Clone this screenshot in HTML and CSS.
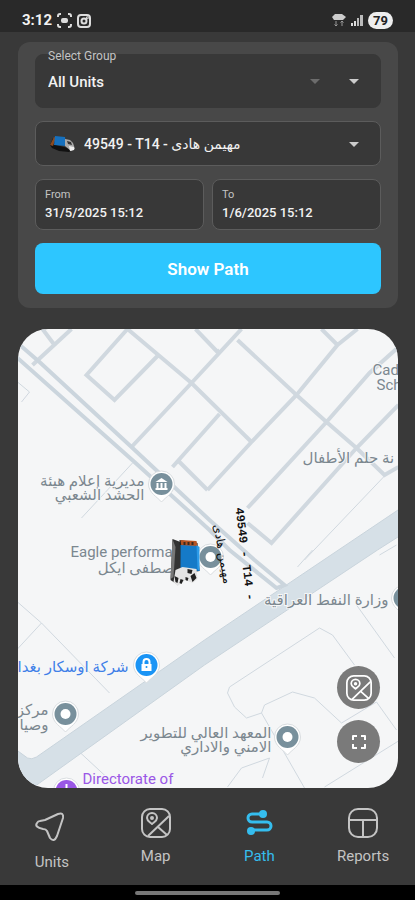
FILE: index.html
```html
<!DOCTYPE html>
<html lang="en">
<head>
    <meta charset="UTF-8" />
    <meta name="viewport" content="width=device-width, initial-scale=1.0" />
    <title>Path</title>
    <link rel="stylesheet" href="styles.css">
</head>
<body>
    <header class="status-bar">
        <span class="clock">3:12</span>
        <svg width="15" height="15" viewBox="0 0 15 15" fill="none" stroke="#ddd" stroke-width="2">
            <path d="M1 4V3a2 2 0 0 1 2-2h1M11 1h1a2 2 0 0 1 2 2v1M14 11v1a2 2 0 0 1-2 2h-1M4 14H3a2 2 0 0 1-2-2v-1" />
            <rect x="5" y="6" width="5" height="3" rx="1" fill="#ddd" />
        </svg>
        <svg width="14" height="15" viewBox="0 0 14 15" fill="none" stroke="#ddd" stroke-width="2">
            <rect x="1" y="2" width="12" height="12" rx="3" />
            <circle cx="7" cy="8" r="2.5" />
            <circle cx="10.300" cy="4.700" r="0.500" />
        </svg>
        <span class="spacer"></span>
        <svg width="14" height="15" viewBox="0 0 14 15" fill="#ccc">
            <path d="M0 4l3-3h7l4 3-3 3H2z" />
            <path d="M4 8v5M2.500 11.500L4 13l1.500-1.500M10 13V8M8.500 9.500L10 8l1.500 1.500" fill="none" stroke="#999" />
        </svg>
        <svg width="12" height="12" viewBox="0 0 12 12">
            <path d="M0 9h2v3H0zM3 7h2v5H3z" fill="#ddd" />
            <path d="M6 4h2v8H6zM9 1h3v11H9z" fill="#bbb" />
        </svg>
        <span class="battery">79</span>
    </header>

    <main>
        <form class="panel">
            <div class="field group-field">
                <label for="group">Select Group</label>
                <select id="group"><option>All Units</option></select>
                <svg class="arrow arrow-dim" width="10" height="5" viewBox="0 0 10 5"><path d="M0 0h10L5 5z" /></svg>
                <svg class="arrow" width="10" height="5" viewBox="0 0 10 5"><path d="M0 0h10L5 5z" /></svg>
            </div>
            <div class="field unit-field">
                <svg class="unit-icon" width="26" height="18" viewBox="0 0 26 18">
                    <path d="M0 10l3-7 3 7 12 3 6 1-5 3-10-1-7-3z" fill="#111" />
                    <path d="M0 10L4 2l2 1-3 8z" fill="#8a4a20" />
                    <path d="M5 1l10 1 1 9-12-1z" fill="#1670bd" />
                    <path d="M15 4l5 1 3 3 2 6-4 2-6-5z" fill="#aaa" />
                    <path d="M17 6l4 1 1 3-4-1z" fill="#333" />
                    <path d="M19 11l5 1v3l-4 1z" fill="#eee" />
                </svg>
                <select id="unit" aria-label="Unit"><option>49549 - T14 - مهيمن هادى</option></select>
                <svg class="arrow" width="10" height="5" viewBox="0 0 10 5"><path d="M0 0h10L5 5z" /></svg>
            </div>
            <div class="dates">
                <div class="field date-field">
                    <label for="from">From</label>
                    <input type="text" id="from" value="31/5/2025 15:12" />
                </div>
                <div class="field date-field">
                    <label for="to">To</label>
                    <input type="text" id="to" value="1/6/2025 15:12" />
                </div>
            </div>
            <button type="button" class="show-path">Show Path</button>
        </form>

        <section class="map">
            <svg class="map-canvas" viewBox="0 0 381 459" preserveAspectRatio="xMidYMid slice">
                <defs>
                    <g id="pin">
                        <path d="M0 18C-4 13-13 9-13 0a13 13 0 0 1 26 0C13 9 4 13 0 18z" fill="#fff" stroke="#d9dde0" />
                        <circle r="11" />
                    </g>
                </defs>

                <g class="lanes">
                    <path d="M339 276l38 53M212 358l90-59 13 7 22 30M212 358l-2 6 7 14 12 11 15-5 3-8 28-13 22 6 27 25 35-21 20 28M244 384l43 75M210 458l14-19 28-10-7 20M307 458l74-46M362 226l17-10M280 238l15-17" />
                    <path d="M0 273l24 21 68 70M24 294L-1 321M62 423l27 25M0 53l12 10-8 10M115 134l-51 55M287 231l80-84" />
                </g>

                <path class="highway" d="M382 180L187 311 19 428q-5 3-9 1l-11-8v39h15l8-6 165-118L360 221l22-14z" />

                <g class="streets">
                    <path d="M25 0l12 16M54 0L15 36M110 0L69 46l28 25 43-44M110 0l64 54 60 59M114 118l60-64L224 0M178 0l22 23" />
                    <path d="M155 138l47-53M160 131l30 30M190 161l44-48 45-47 41-50L340 0M304 0l16 16" />
                    <path d="M200 23l2-2M220 11l59 55 30 27 30 26 28 27 14-8M230 179l79-86 43-49 29-26M230 194l24 20 85-95 42-43" />
                </g>
                <path class="avenue" d="M0 14l22 19 92 85 78 73 45 40 30 25-8 3-47-38-20-20-75-68L-1 28" />

                <g class="pins">
                    <use href="#pin" x="144" y="155" />
                    <path d="M138 153l6-4 6 4zM139 154h2v5h-2zM143 154h2v5h-2zM147 154h2v5h-2zM138 159h12v2h-12z" fill="#fff" />
                    <use href="#pin" x="193" y="228" />
                    <circle cx="193" cy="228" r="5" fill="#fff" />
                    <use href="#pin" x="129" y="336" fill="#1a94f5" />
                    <path d="M124 335h10v7h-10z" fill="#fff" />
                    <path d="M126 335v-2a3 3 0 0 1 6 0v2" fill="none" stroke="#fff" stroke-width="2" />
                    <circle cx="129" cy="338" r="1" fill="#1a94f5" />
                    <use href="#pin" x="48" y="385" />
                    <circle cx="48" cy="385" r="5" fill="#fff" />
                    <use href="#pin" x="270" y="408" />
                    <circle cx="270" cy="408" r="5" fill="#fff" />
                    <use href="#pin" x="387" y="269" />
                    <use href="#pin" x="49" y="462" fill="#9a57e6" />
                    <path d="M48 459v-4h2v4z" fill="#fff" />
                </g>

                <g class="places">
                    <text x="127" y="157" text-anchor="end">مديرية إعلام هيئة</text>
                    <text x="127" y="171" text-anchor="end">الحشد الشعبي</text>
                    <text x="53" y="228">Eagle performa</text>
                    <text x="157" y="244" text-anchor="end">صطفى ايكل</text>
                    <text x="355" y="46">Cad</text>
                    <text x="359" y="61">Sch</text>
                    <text x="285" y="134">نة حلم الأطفال</text>
                    <text x="371" y="276" text-anchor="end">وزارة النفط العراقية</text>
                    <text class="shop" x="111" y="343" text-anchor="end">شركة اوسكار بغدا</text>
                    <text x="31" y="386" text-anchor="end">مركز</text>
                    <text x="31" y="401" text-anchor="end">وصيا</text>
                    <text x="254" y="409" text-anchor="end">المعهد العالي للتطوير</text>
                    <text x="254" y="423" text-anchor="end">الامني والاداري</text>
                    <text class="office" x="65" y="455">Directorate of</text>
                </g>

                <g class="truck">
                    <path d="M155 210l8 3 2 30-6 12-6-4z" fill="#333" />
                    <path d="M155 210l3 8-2 30-3 2z" fill="#777" />
                    <path d="M162 211l18 3 2 28-18 3z" fill="#222" />
                    <path d="M163 211l16 1 1 5-16 1z" fill="#b65323" />
                    <path d="M166 213h2v3h-2zM170 213h2v3h-2zM174 213h2v3h-2z" fill="#3a2a20" />
                    <path d="M163 216l17 1 2 25-19-1z" fill="#157ac8" />
                    <path d="M179 216l3 2v24l-2-2z" fill="#2c9be8" />
                    <path d="M158 241l7-3 14 2 1 10-5 4-7-3-8 6-4-4z" fill="#e4e4e4" />
                    <path d="M157 247l4 2-1 5-2-1zM163 250l3 1-2 4-2-1zM170 240l5 1-1 4-4-1zM173 247l4-3 2 5-4 4zM168 248l3 1-1 3-2-1z" fill="#222" />
                </g>

                <g class="unit-tag">
                    <text transform="translate(218 179) rotate(83)">49549 - T14 -</text>
                    <text class="tag-name" transform="translate(196 196) rotate(80)">مهيمن هادى</text>
                </g>
            </svg>

            <div class="map-actions">
                <button type="button" aria-label="Map type">
                    <svg width="26" height="26" viewBox="0 0 30 30"><use href="#map-icon" /></svg>
                </button>
                <button type="button" aria-label="Full screen">
                    <svg width="14" height="14" viewBox="0 0 14 14"><path d="M1 5V1h4M9 1h4v4M13 9v4H9M5 13H1V9" /></svg>
                </button>
            </div>
        </section>
    </main>

    <nav class="tabs">
        <a href="#units" class="tab">
            <svg width="36" height="36" viewBox="0 0 36 36">
                <path d="M6 13l5-1 13-6q6-2 5 4l-6 18q-3 7-7 2l-3-7q-1-2-4-2-9-2-6-6 1-2 3-2z" />
            </svg>
            <span>Units</span>
        </a>
        <a href="#map" class="tab">
            <svg width="30" height="30" viewBox="0 0 30 30">
                <g id="map-icon">
                    <rect x="1" y="1" width="28" height="28" rx="8" />
                    <path d="M7 28L28 8M17 19l9 8" />
                    <path d="M11 16c-2-2-5-3-5-6a5 5 0 0 1 10 0c0 3-3 4-5 6z" />
                    <circle cx="11" cy="10" r="1" />
                </g>
            </svg>
            <span>Map</span>
        </a>
        <a href="#path" class="tab tab-active" aria-current="page">
            <svg width="30" height="30" viewBox="0 0 30 30">
                <path d="M17 6H8a4 4 0 0 0 0 8h15a4 4 0 0 1 0 8H8" />
                <circle cx="19" cy="6" r="4" fill="currentColor" stroke="none" />
                <circle cx="7" cy="23" r="4" fill="currentColor" stroke="none" />
            </svg>
            <span>Path</span>
        </a>
        <a href="#reports" class="tab">
            <svg width="30" height="30" viewBox="0 0 30 30">
                <rect x="1" y="1" width="28" height="28" rx="9" />
                <path d="M1 12h28M15 12v17" />
            </svg>
            <span>Reports</span>
        </a>
    </nav>
    <div class="home-bar"><span></span></div>
</body>
</html>
```

FILE: styles.css
```css
:root {
    --accent-color: #2dc6ff;
    --page-color: #393939;
    --panel-color: #484848;
    --field-color: #383838;
    --text-color: #f2f2f2;
    --muted-color: #c4c4c4;
    --border-radius: 8px;
}

* {
    box-sizing: border-box;
}

body {
    font-family: Roboto, "DejaVu Sans", sans-serif;
    background-color: var(--page-color);
    color: var(--text-color);
    margin: 0;
    display: flex;
    flex-direction: column;
    min-height: 100vh;
}

.status-bar {
    display: flex;
    align-items: center;
    gap: 5px;
    height: 32px;
    padding: 8px 22px 0;
    background-color: #292929;
}

.clock {
    font-size: 15px;
    font-weight: 700;
}

.spacer {
    flex: 1;
}

.battery {
    background-color: #eee;
    color: #222;
    border-radius: 9px;
    padding: 0 5px;
    font-size: 13px;
    line-height: 17px;
    font-weight: 700;
}

main {
    flex: 1;
    display: flex;
    flex-direction: column;
    gap: 21px;
    padding: 10px 17px 0 18px;
}

.panel {
    background-color: var(--panel-color);
    border-radius: 12px;
    padding: 12px 17px 14px;
    display: flex;
    flex-direction: column;
    gap: 13px;
}

.field {
    position: relative;
    background-color: var(--field-color);
    border: 1px solid #5c5c5c;
    border-radius: var(--border-radius);
}

.field select,
.field input {
    appearance: none;
    width: 100%;
    background: none;
    border: none;
    color: inherit;
    font-family: inherit;
    font-size: 14px;
    font-weight: 500;
    padding: 0;
}

.group-field {
    height: 54px;
    border-color: var(--field-color);
}

.group-field label {
    position: absolute;
    top: -7px;
    left: 12px;
    font-size: 12px;
    line-height: 16px;
    color: var(--muted-color);
}

.group-field select {
    height: 100%;
    padding: 2px 12px 0;
    font-size: 15px;
}

.unit-field {
    height: 45px;
}

.unit-field select {
    height: 100%;
    padding-left: 48px;
}

.unit-icon {
    position: absolute;
    top: 13px;
    left: 14px;
}

.arrow {
    position: absolute;
    right: 21px;
    top: calc(50% - 2px);
    fill: #ccc;
}

.arrow-dim {
    right: 60px;
    fill: #6c6c6c;
}

.dates {
    display: grid;
    grid-template-columns: 1fr 1fr;
    gap: 8px;
}

.date-field {
    height: 51px;
    padding: 7px 9px;
    display: flex;
    flex-direction: column;
}

.date-field label {
    font-size: 11px;
    line-height: 16px;
    color: var(--muted-color);
}

.date-field input {
    font-size: 13px;
    height: 20px;
}

.show-path {
    height: 51px;
    background-color: var(--accent-color);
    color: white;
    border: none;
    border-radius: var(--border-radius);
    font-family: inherit;
    font-size: 17px;
    font-weight: 600;
    cursor: pointer;
}

.map {
    position: relative;
    flex: 1;
    min-height: 300px;
    overflow: hidden;
    border-radius: 30px;
    background-color: #f5f6f7;
}

.map-canvas {
    position: absolute;
    width: 100%;
    height: 100%;
}

.lanes,
.streets,
.avenue {
    fill: none;
    stroke: #d0d8df;
}

.lanes {
    stroke-width: 1;
}

.streets {
    stroke-width: 4;
}

.avenue {
    stroke-width: 4;
    stroke: #cbd5dd;
}

.highway {
    fill: #d6e0e7;
    stroke: #c9d4dc;
}

.pins {
    fill: #78909c;
}

.places {
    fill: #7b878f;
    font-size: 15px;
    paint-order: stroke;
    stroke: #f5f6f7;
    stroke-width: 2px;
}

.places .shop {
    fill: #3f7fe8;
}

.places .office {
    fill: #9a57e6;
}

.unit-tag {
    fill: #111;
    font-family: "Liberation Mono", monospace;
    font-size: 12px;
    font-weight: 700;
}

.tag-name {
    font-family: "DejaVu Sans", sans-serif;
    font-weight: 400;
}

.map-actions {
    position: absolute;
    right: 18px;
    bottom: 25px;
    display: flex;
    flex-direction: column;
    gap: 11px;
}

.map-actions button {
    width: 43px;
    height: 43px;
    border: none;
    border-radius: 50%;
    padding: 0;
    background-color: #7a7a7a;
    color: white;
    display: flex;
    align-items: center;
    justify-content: center;
    cursor: pointer;
}

.map-actions svg,
.tab svg {
    fill: none;
    stroke: currentColor;
    stroke-width: 2;
    stroke-linejoin: round;
}

.tabs {
    display: grid;
    grid-template-columns: repeat(4, 1fr);
    height: 97px;
    padding-top: 20px;
}

.tab {
    display: flex;
    flex-direction: column;
    align-items: center;
    gap: 8px;
    color: var(--muted-color);
    font-size: 15px;
    line-height: 20px;
    font-weight: 400;
    text-decoration: none;
}

.tab-active {
    color: #35bdee;
}

.tab-active svg {
    stroke-width: 3;
}

.home-bar {
    height: 15px;
    background-color: #000;
    display: flex;
    justify-content: center;
    align-items: center;
}

.home-bar span {
    width: 35%;
    height: 4px;
    border-radius: 2px;
    background-color: #777;
}
```
